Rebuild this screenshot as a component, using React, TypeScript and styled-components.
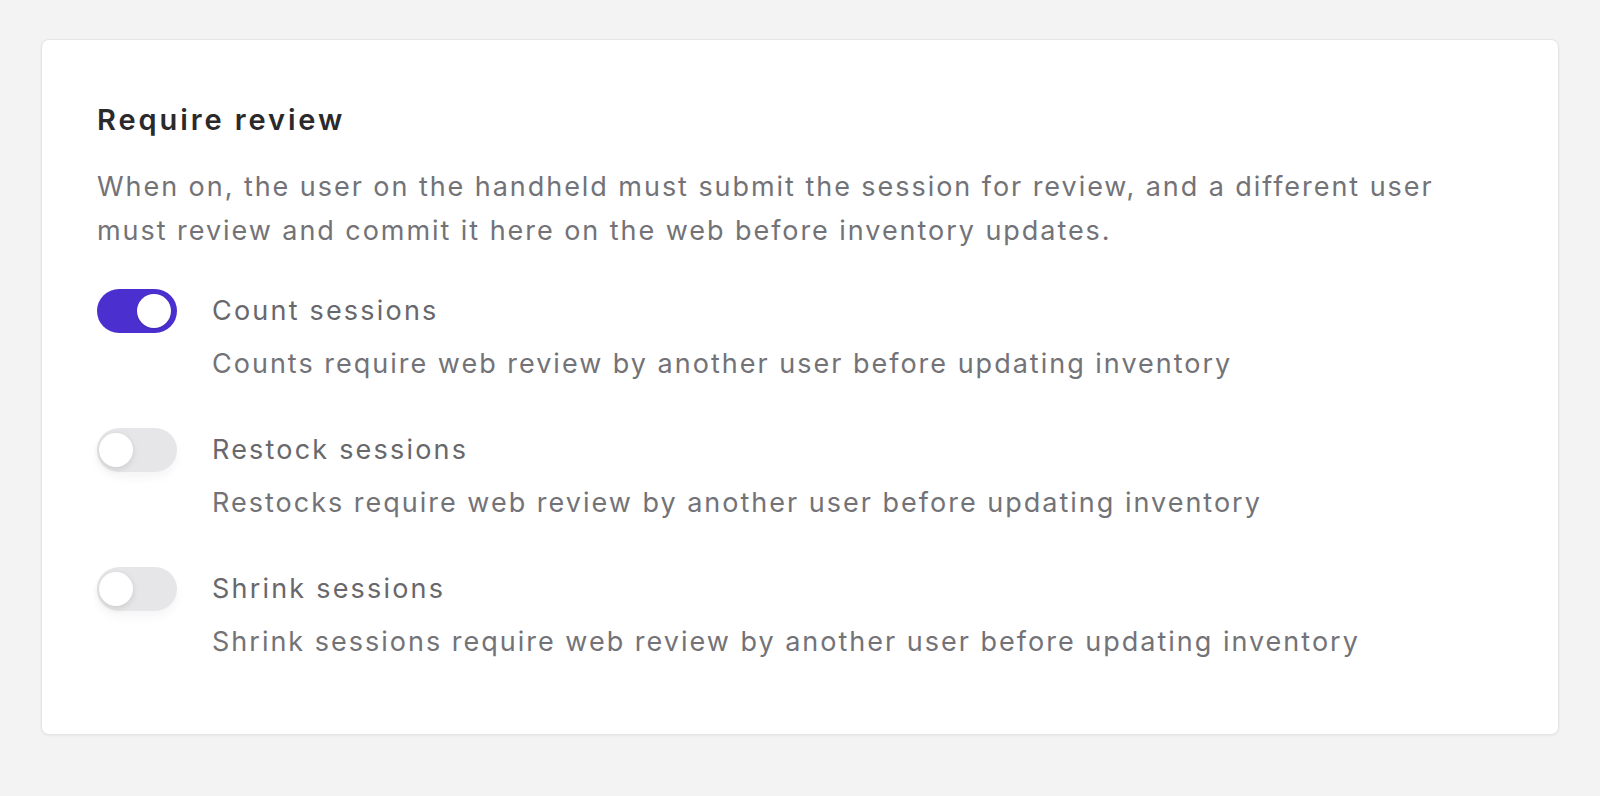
import React, { useState } from "react";
import styled, { createGlobalStyle } from "styled-components";

const Global = createGlobalStyle`
  html, body {
    margin: 0;
    padding: 0;
    background: #f3f3f3;
  }
  body {
    font-family: Inter, "Noto Sans", "Liberation Sans", sans-serif;
    -webkit-font-smoothing: antialiased;
  }
`;

const Page = styled.div`
  box-sizing: border-box;
  min-height: 796px;
  padding: 39px 41px 61px 41px;
  border-bottom: 2px solid #e9e9e9;
`;

const Card = styled.section`
  box-sizing: border-box;
  height: 696px;
  background: #ffffff;
  border: 1px solid #e4e4e6;
  border-radius: 8px;
  box-shadow: 0 1px 3px rgba(0, 0, 0, 0.05);
  padding: 60px 56px 0 55px;
`;

const Title = styled.h2`
  margin: 0;
  font-size: 29px;
  line-height: 40px;
  font-weight: 600;
  color: #2a2a2c;
  letter-spacing: 2.9px;
`;

const Description = styled.p`
  margin: 25px 0 0 0;
  font-size: 27px;
  line-height: 44px;
  font-weight: 400;
  color: #737377;
  letter-spacing: 1.95px;
`;

const List = styled.div`
  display: flex;
  flex-direction: column;
  gap: 42px;
  margin-top: 36px;
`;

const Row = styled.div`
  display: grid;
  grid-template-columns: 80px 1fr;
  column-gap: 35px;
  align-items: start;
`;

const Track = styled.button<{ $on: boolean }>`
  position: relative;
  width: 80px;
  height: 44px;
  padding: 0;
  border: none;
  border-radius: 22px;
  cursor: pointer;
  background: ${(p) => (p.$on ? "#4b30cf" : "#e6e6e9")};
  box-shadow: ${(p) => (p.$on ? "none" : "0 6px 10px rgba(0,0,0,0.04)")};
`;

const Knob = styled.span<{ $on: boolean }>`
  position: absolute;
  top: 5px;
  left: ${(p) => (p.$on ? "40px" : "2px")};
  width: 34px;
  height: 34px;
  border-radius: 50%;
  background: #ffffff;
  box-shadow: ${(p) =>
    p.$on ? "0 1px 2px rgba(0,0,0,0.15)" : "0 2px 6px rgba(0,0,0,0.12)"};
`;

const Texts = styled.div`
  display: flex;
  flex-direction: column;
  gap: 9px;
`;

const Label = styled.div`
  font-size: 27px;
  line-height: 44px;
  font-weight: 400;
  color: #68686c;
  letter-spacing: 2.2px;
`;

const Sub = styled.div`
  font-size: 27px;
  line-height: 44px;
  font-weight: 400;
  color: #737377;
  letter-spacing: 2px;
`;

type Item = { key: string; label: string; sub: string; on: boolean };

const initial: Item[] = [
  {
    key: "count",
    label: "Count sessions",
    sub: "Counts require web review by another user before updating inventory",
    on: true,
  },
  {
    key: "restock",
    label: "Restock sessions",
    sub: "Restocks require web review by another user before updating inventory",
    on: false,
  },
  {
    key: "shrink",
    label: "Shrink sessions",
    sub: "Shrink sessions require web review by another user before updating inventory",
    on: false,
  },
];

export default function App() {
  const [items, setItems] = useState<Item[]>(initial);
  const toggle = (k: string) =>
    setItems((prev) => prev.map((i) => (i.key === k ? { ...i, on: !i.on } : i)));

  return (
    <>
      <Global />
      <Page>
        <Card>
          <Title>Require review</Title>
          <Description>
            When on, the user on the handheld must submit the session for review, and a different user
            <br />
            must review and commit it here on the web before inventory updates.
          </Description>
          <List>
            {items.map((i) => (
              <Row key={i.key}>
                <Track $on={i.on} onClick={() => toggle(i.key)} aria-pressed={i.on}>
                  <Knob $on={i.on} />
                </Track>
                <Texts>
                  <Label>{i.label}</Label>
                  <Sub>{i.sub}</Sub>
                </Texts>
              </Row>
            ))}
          </List>
        </Card>
      </Page>
    </>
  );
}
